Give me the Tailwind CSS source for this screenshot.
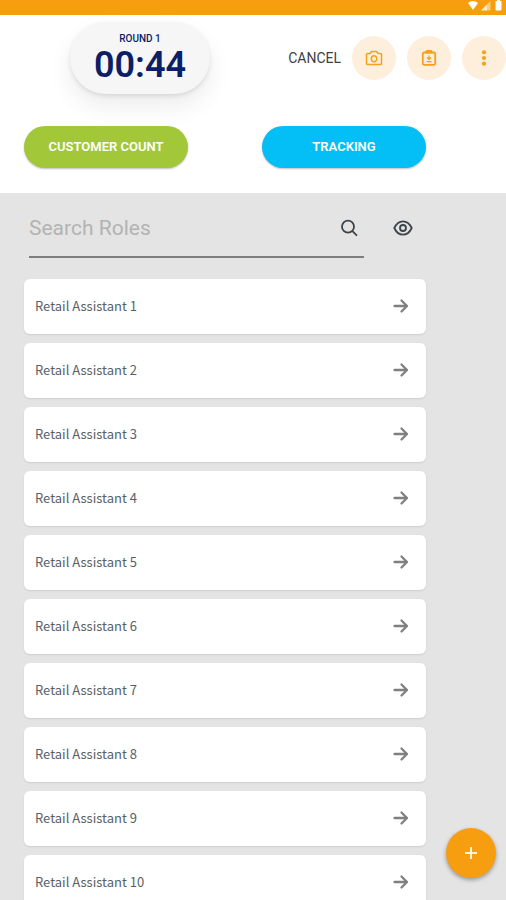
<!DOCTYPE html>
<html lang="en">
<head>
<meta charset="utf-8">
<meta name="viewport" content="width=device-width, initial-scale=1">
<title>Roles</title>
<script src="https://cdn.jsdelivr.net/npm/@tailwindcss/browser@4"></script>
</head>
<body class="flex h-screen flex-col overflow-hidden bg-[#e4e4e4] font-['Roboto',sans-serif]">
  <div class="flex h-[15px] shrink-0 items-start justify-end gap-[2px] bg-[#f79e10] pr-1 text-white" aria-hidden="true">
    <svg class="h-[11px] w-3" viewBox="0 0 12 11" fill="currentColor"><path d="M1 3Q6-1 11 3L6 10Z"/></svg>
    <svg class="h-[11px] w-[10px]" viewBox="0 0 10 11"><path d="M0 10.500L9.500 1V10.500Z" fill="currentColor" opacity=".45"/><path d="M0 10.500L6 4.500V10.500Z" fill="currentColor" opacity=".6"/></svg>
    <svg class="ml-[2px] h-[11px] w-[7px]" viewBox="0 0 7 11" fill="currentColor"><path d="M2 0H5V1H6.500V9.500Q6.500 10.500 5.500 10.500H1.500Q.5 10.500 .5 9.500V1H2Z"/></svg>
  </div>

  <header class="shrink-0 bg-white pt-[7px] pb-[25px]">
    <div class="flex items-center justify-between pl-[70px]">
      <div class="flex h-[72px] w-[140px] flex-col items-center rounded-full bg-[#f6f6f6] pt-[10px] text-[#0b1e66] shadow-[0_2px_4px_rgba(0,0,0,0.10),0_12px_24px_rgba(0,0,0,0.08)]">
        <span class="text-[10px] leading-[14px] font-medium">ROUND 1</span>
        <span class="text-[36px] leading-[38px] font-semibold">00:44</span>
      </div>
      <div class="flex items-center gap-[11px]">
        <button type="button" class="pb-px text-sm text-[#3c4148]">CANCEL</button>
        <button type="button" aria-label="Take photo" class="grid size-11 place-items-center rounded-full bg-[#fdefdc] text-[#f5a11c]">
          <svg class="size-[18px]" viewBox="0 0 18 18" fill="none" stroke="currentColor" stroke-width="1.500" stroke-linejoin="round"><path d="M2.500 4.500H5L6.500 2.500H11.500L13 4.500H15.500Q16.500 4.500 16.500 5.500V14.500Q16.500 15.500 15.500 15.500H2.500Q1.500 15.500 1.500 14.500V5.500Q1.500 4.500 2.500 4.500Z"/><ellipse cx="9" cy="9.700" rx="2.700" ry="3"/></svg>
        </button>
        <button type="button" aria-label="Notes" class="grid size-11 place-items-center rounded-full bg-[#fdefdc] text-[#f5a11c]">
          <svg class="size-[18px]" viewBox="0 0 18 18" fill="none" stroke="currentColor" stroke-width="1.800" stroke-linejoin="round"><rect x="2.800" y="3.500" width="12.400" height="12.400" rx="1.500"/><path d="M6 4V2.500Q6 1.500 7 1.500H11Q12 1.500 12 2.500V4Z" fill="currentColor" stroke-width="1"/><path d="M9 6.500V10M7 8.500L9 10.500L11 8.500M6.500 12.700H11.500" stroke-width="1.300"/></svg>
        </button>
        <button type="button" aria-label="More options" class="grid size-11 place-items-center rounded-full bg-[#fdefdc] text-[#f5a11c]">
          <svg class="size-[18px]" viewBox="0 0 18 18" fill="currentColor"><circle cx="9" cy="3.300" r="2.100"/><circle cx="9" cy="9" r="2.100"/><circle cx="9" cy="14.700" r="2.100"/></svg>
        </button>
      </div>
    </div>
    <div class="mt-8 grid grid-cols-2 gap-[74px] pr-20 pl-6">
      <button type="button" class="h-[42px] rounded-full bg-[#a2c83a] pb-px text-[13px] font-semibold text-white shadow-[0_1px_2px_rgba(0,0,0,0.25)]">CUSTOMER COUNT</button>
      <button type="button" class="h-[42px] rounded-full bg-[#03bff5] pb-px text-[13px] font-semibold text-white shadow-[0_1px_2px_rgba(0,0,0,0.25)]">TRACKING</button>
    </div>
  </header>

  <main class="min-h-0 flex-1 overflow-hidden pt-3 pr-20 pl-6">
    <form class="flex items-start gap-4 pl-[5px]" role="search">
      <div class="flex h-[53px] min-w-0 flex-1 items-start border-b-2 border-[#7d7d7d]">
        <input type="search" aria-label="Search Roles" placeholder="Search Roles" class="h-[46px] min-w-0 flex-1 bg-transparent text-[21px] text-[#3c4148] outline-none placeholder:text-[#b3b3b3]">
        <button type="submit" aria-label="Search" class="grid h-[46px] w-[30px] place-items-center text-[#3d434b]">
          <svg class="size-[18px]" viewBox="0 0 18 18" fill="none" stroke="currentColor" stroke-width="1.800" stroke-linecap="round"><circle cx="8" cy="7.700" r="6"/><path d="M12.400 12.100L16.500 16.200"/></svg>
        </button>
      </div>
      <button type="button" aria-label="Show or hide roles" class="grid h-[46px] w-[46px] place-items-center text-[#3d434b]">
        <svg class="size-5" viewBox="0 0 20 20" fill="none" stroke="currentColor" stroke-width="1.800" stroke-linejoin="round"><path d="M1.300 10C3.300 5.700 6.300 3.300 10 3.300S16.700 5.700 18.700 10C16.700 14.300 13.700 16.700 10 16.700S3.300 14.300 1.300 10Z"/><circle cx="10" cy="10" r="3"/></svg>
      </button>
    </form>

    <ul id="roles" class="mt-[21px] flex flex-col gap-[9px]"></ul>
    <template id="role">
      <li>
        <a href="#" class="flex h-[55px] items-center justify-between rounded-md bg-white pr-4 pb-px pl-[11px] font-['Noto_Sans_CJK_SC',sans-serif] text-[13px] text-[#5a5f66] shadow-[0_1px_2px_rgba(0,0,0,0.10)]">
          <span class="pb-px">&nbsp;</span>
          <svg class="size-[18px] text-[#808080]" viewBox="0 0 18 18" fill="none" stroke="currentColor" stroke-width="2.300" stroke-linecap="round" stroke-linejoin="round" aria-hidden="true"><path d="M2.500 9H15M9.500 3.500L15 9L9.500 14.500"/></svg>
        </a>
      </li>
    </template>
  </main>

  <button type="button" aria-label="Add role" class="fixed right-[10px] bottom-[22px] grid size-[50px] place-items-center rounded-full bg-[#f79e10] text-[#fff3dc] shadow-[0_2px_4px_rgba(0,0,0,0.35)]">
    <svg class="size-3" viewBox="0 0 12 12" fill="none" stroke="currentColor" stroke-width="2"><path d="M6 0V12M0 6H12"/></svg>
  </button>

  <script>
    const list = document.getElementById('roles');
    const template = document.getElementById('role');
    for (let n = 1; n <= 10; n++) {
      const item = template.content.cloneNode(true);
      item.querySelector('span').textContent = 'Retail Assistant ' + n;
      list.append(item);
    }
  </script>
</body>
</html>
